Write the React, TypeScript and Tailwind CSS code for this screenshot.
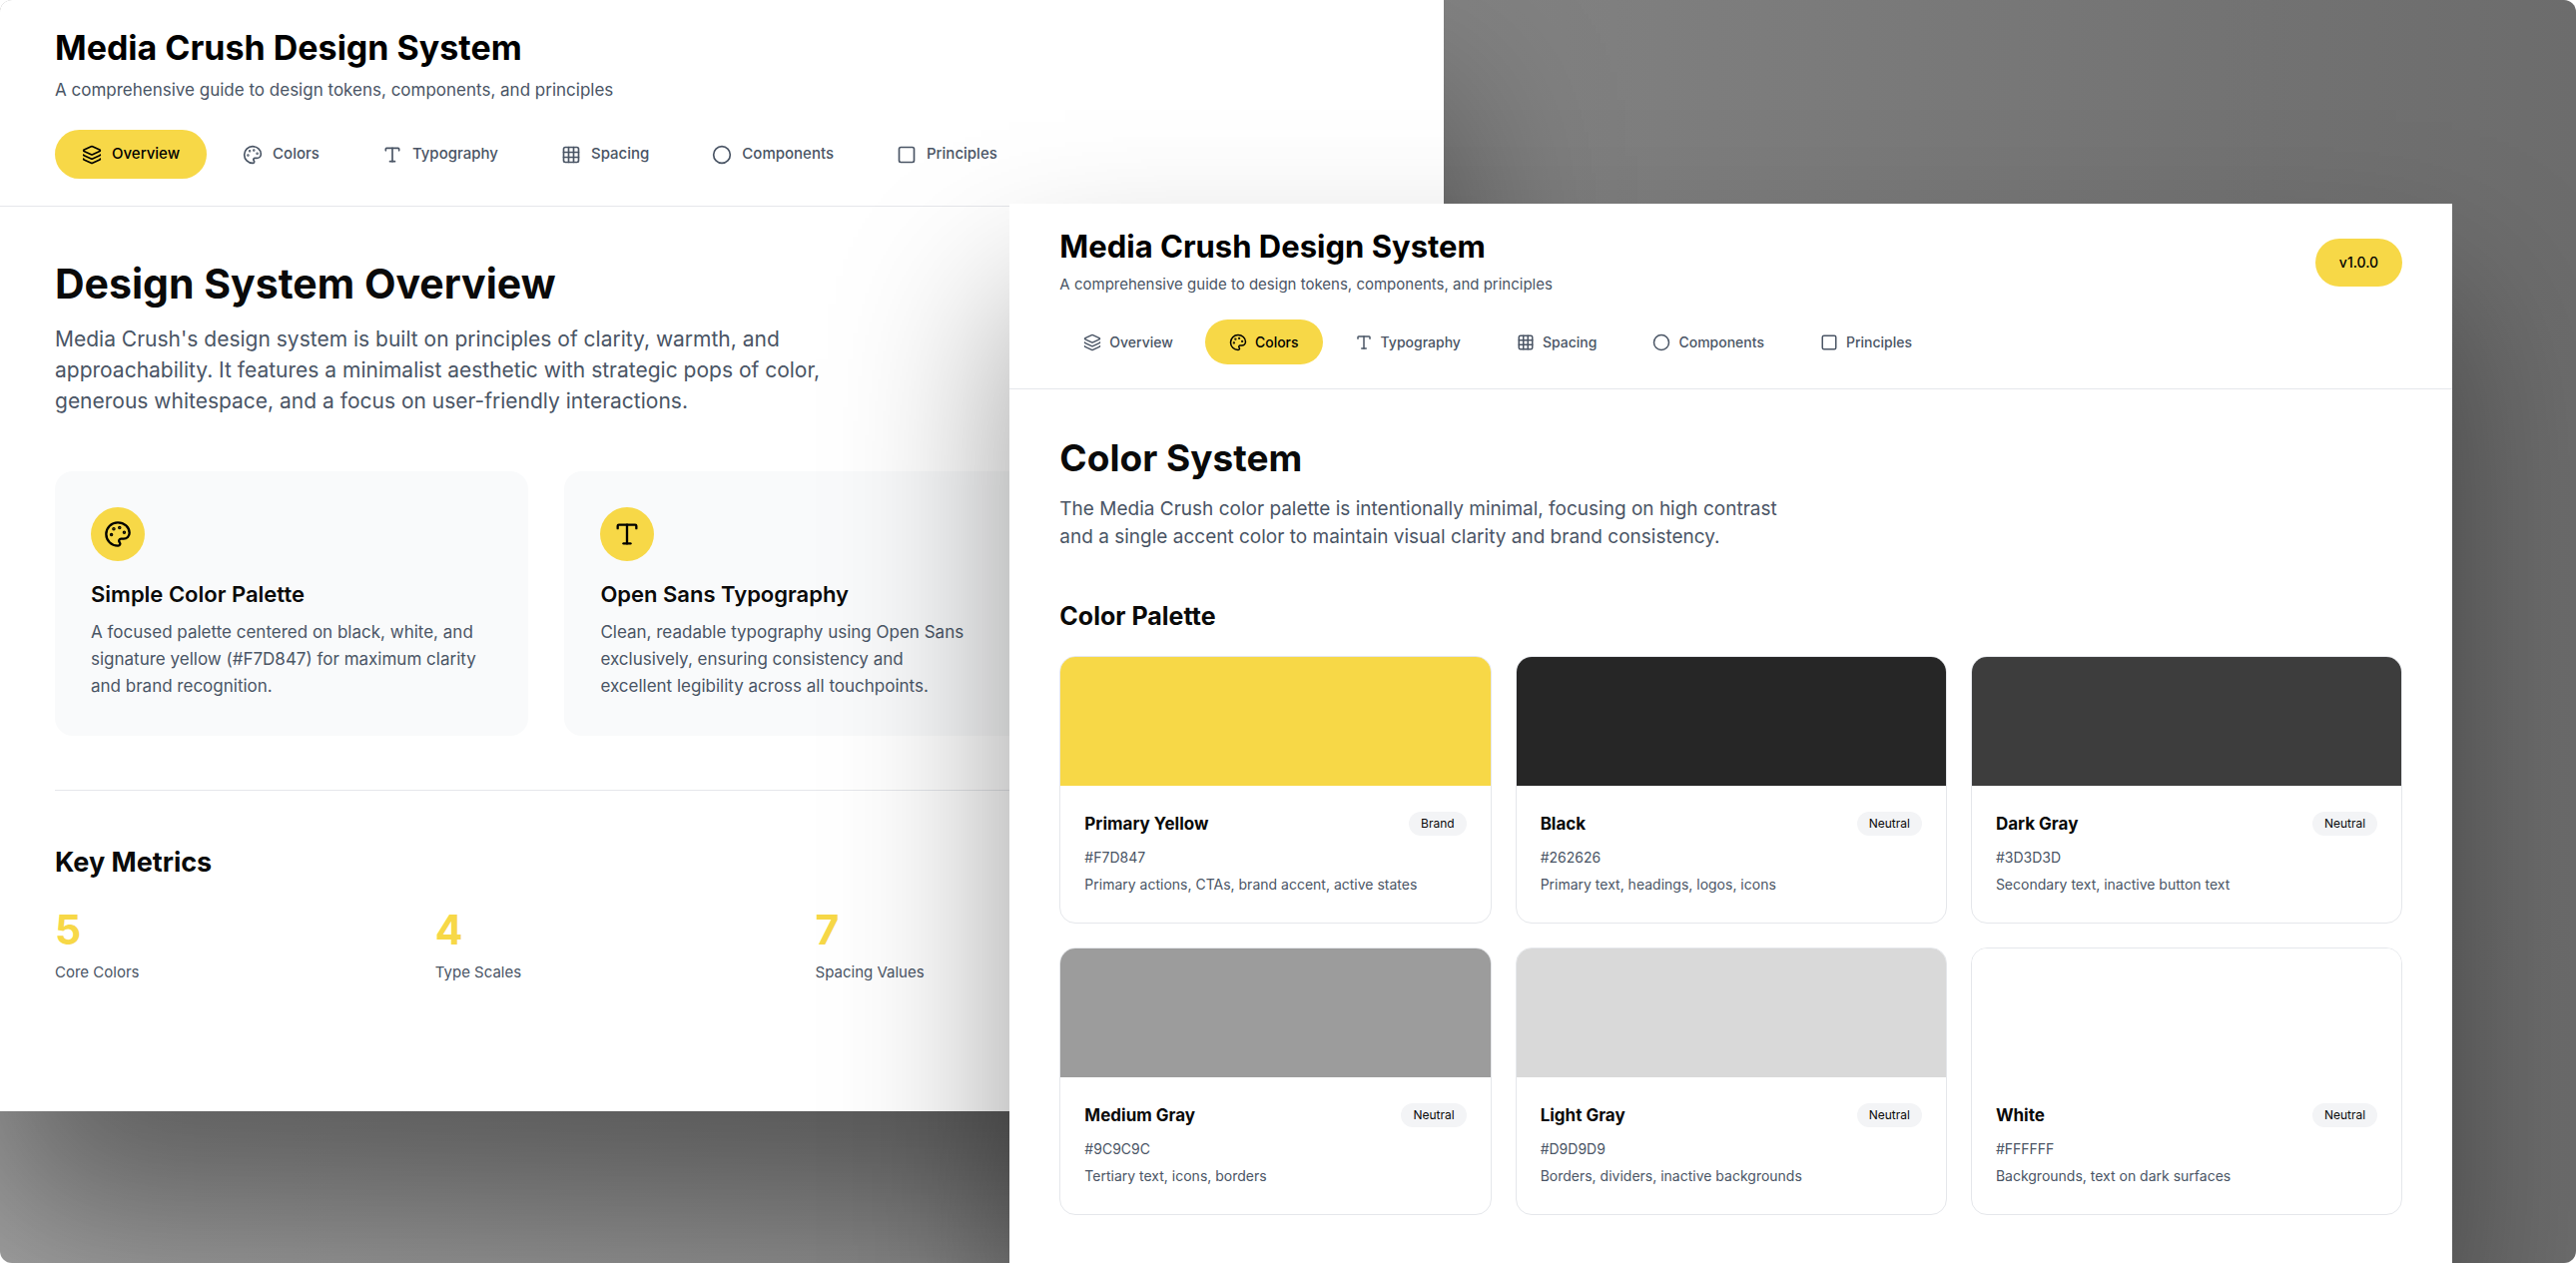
import { Circle, Grid3x3, Layers, Palette, Square, Type } from "lucide-react";
import type { LucideIcon } from "lucide-react";

// ═══════════════════════════════════════════════
// Media Crush Design System: overview + colors windows
// ═══════════════════════════════════════════════

interface Tab {
  label: string;
  icon: LucideIcon;
}

interface Swatch {
  name: string;
  hex: string;
  usage: string;
  group: string;
  fill: string;
}

const TABS: Tab[] = [
  { label: "Overview", icon: Layers },
  { label: "Colors", icon: Palette },
  { label: "Typography", icon: Type },
  { label: "Spacing", icon: Grid3x3 },
  { label: "Components", icon: Circle },
  { label: "Principles", icon: Square },
];

const FEATURES = [
  {
    icon: Palette,
    title: "Simple Color Palette",
    text: "A focused palette centered on black, white, and signature yellow (#F7D847) for maximum clarity and brand recognition.",
  },
  {
    icon: Type,
    title: "Open Sans Typography",
    text: "Clean, readable typography using Open Sans exclusively, ensuring consistency and excellent\u00a0legibility across all touchpoints.",
  },
];

const METRICS = [
  { value: "5", label: "Core Colors" },
  { value: "4", label: "Type Scales" },
  { value: "7", label: "Spacing Values" },
];

const SWATCHES: Swatch[] = [
  {
    name: "Primary Yellow",
    hex: "#F7D847",
    usage: "Primary actions, CTAs, brand accent, active states",
    group: "Brand",
    fill: "bg-[#f7d847]",
  },
  {
    name: "Black",
    hex: "#262626",
    usage: "Primary text, headings, logos, icons",
    group: "Neutral",
    fill: "bg-[#262626]",
  },
  {
    name: "Dark Gray",
    hex: "#3D3D3D",
    usage: "Secondary text, inactive button text",
    group: "Neutral",
    fill: "bg-[#3d3d3d]",
  },
  {
    name: "Medium Gray",
    hex: "#9C9C9C",
    usage: "Tertiary text, icons, borders",
    group: "Neutral",
    fill: "bg-[#9c9c9c]",
  },
  {
    name: "Light Gray",
    hex: "#D9D9D9",
    usage: "Borders, dividers, inactive backgrounds",
    group: "Neutral",
    fill: "bg-[#d9d9d9]",
  },
  {
    name: "White",
    hex: "#FFFFFF",
    usage: "Backgrounds, text on dark surfaces",
    group: "Neutral",
    fill: "bg-white",
  },
];

function Nav({ active, large = false }: { active: string; large?: boolean }) {
  return (
    <nav className={large ? "flex gap-[9px] mt-[26px]" : "flex gap-2 mt-[23px]"}>
      {TABS.map(({ label, icon: Icon }) => (
        <button
          key={label}
          type="button"
          className={`flex items-center rounded-full font-medium whitespace-nowrap ${
            large ? "h-[49px] px-[27px] gap-2.5 text-[15px]" : "h-[45px] px-6 gap-2 text-sm"
          } ${label === active ? "bg-[#f7d847] text-black" : "text-gray-600"}`}
        >
          <Icon className={large ? "size-5" : "size-[18px]"} />
          {label}
        </button>
      ))}
    </nav>
  );
}

function OverviewWindow() {
  return (
    <section className="w-[56.05%] overflow-hidden bg-white shadow-[0_100px_160px_rgba(0,0,0,0.4)]">
      {/* wider than the window, so the right-hand columns run off its edge */}
      <div className="w-[111%]">
        <header className="px-[55px] pt-7 pb-[27px] border-b border-gray-200">
          <h1 className="text-[34px] leading-10 font-bold text-black">Media Crush Design System</h1>
          <p className="mt-2 text-[17px] leading-7 text-gray-600">
            A comprehensive guide to design tokens, components, and principles
          </p>
          <Nav active="Overview" large />
        </header>

        <main className="px-[55px] pt-[54px] pb-[127px]">
          <h2 className="text-[41px] leading-[46px] font-bold text-neutral-950">
            Design System Overview
          </h2>
          <p className="mt-[17px] max-w-[820px] text-[21px] leading-[31px] text-gray-600">
            Media Crush's design system is built on principles of clarity, warmth, and
            approachability. It features a minimalist aesthetic with strategic pops of color,
            generous whitespace, and a focus on user-friendly interactions.
          </p>

          <div className="mt-[55px] grid grid-cols-3 gap-9">
            {FEATURES.map(({ icon: Icon, title, text }) => (
              <article key={title} className="rounded-[18px] bg-gray-50 p-9">
                <div className="flex size-[54px] items-center justify-center rounded-full bg-[#f7d847]">
                  <Icon className="size-7 text-black" />
                </div>
                <h3 className="mt-[18px] text-[22px] leading-[30px] font-semibold text-neutral-950">
                  {title}
                </h3>
                <p className="mt-2.5 text-[17px] leading-[27px] text-gray-600">{text}</p>
              </article>
            ))}
          </div>

          <hr className="my-[54px] border-gray-200" />

          <h2 className="text-[27px] leading-9 font-bold text-neutral-950">Key Metrics</h2>
          <dl className="mt-[26px] grid grid-cols-4 gap-7">
            {METRICS.map((m) => (
              <div key={m.label} className="flex flex-col-reverse gap-2">
                <dt className="text-[15px] leading-6 text-gray-600">{m.label}</dt>
                <dd className="text-[41px] leading-[46px] font-bold text-[#f7d847]">{m.value}</dd>
              </div>
            ))}
          </dl>
        </main>
      </div>
    </section>
  );
}

function SwatchCard({ swatch }: { swatch: Swatch }) {
  return (
    <article className="overflow-hidden rounded-2xl border border-gray-200 bg-white">
      <div className={`h-[129px] ${swatch.fill}`} />
      <div className="px-6 pt-6 pb-[25px]">
        <div className="flex items-center justify-between">
          <h3 className="text-[17px] leading-7 font-bold text-neutral-950">{swatch.name}</h3>
          <span className="rounded-full bg-gray-100 px-3 py-1 text-xs text-neutral-950">
            {swatch.group}
          </span>
        </div>
        <p className="mt-1.5 text-sm leading-[27px] text-gray-600">{swatch.hex}</p>
        <p className="text-sm leading-[27px] text-gray-600">{swatch.usage}</p>
      </div>
    </article>
  );
}

function ColorsWindow() {
  return (
    <section className="absolute top-[204px] bottom-0 left-[39.2%] w-[56%] overflow-hidden bg-white shadow-[0_100px_160px_rgba(0,0,0,0.4)]">
      <header className="px-[50px] pt-[25px] pb-6 border-b border-gray-200">
        <div className="flex items-center justify-between">
          <div>
            <h1 className="text-[31px] leading-9 font-bold text-black">
              Media Crush Design System
            </h1>
            <p className="mt-2 text-[15px] leading-6 text-gray-600">
              A comprehensive guide to design tokens, components, and principles
            </p>
          </div>
          <span className="flex h-12 items-center rounded-full bg-[#f7d847] px-6 text-sm font-medium text-black">
            v1.0.0
          </span>
        </div>
        <Nav active="Colors" />
      </header>

      <main className="px-[50px] pt-[49px] pb-8">
        <h2 className="text-[37px] leading-10 font-bold text-neutral-950">Color System</h2>
        <p className="mt-[17px] max-w-[740px] text-[19px] leading-7 text-gray-600">
          The Media Crush color palette is intentionally minimal, focusing on high contrast and a
          single accent color to maintain visual clarity and brand consistency.
        </p>

        <h3 className="mt-[49px] text-[25px] leading-8 font-bold text-neutral-950">
          Color Palette
        </h3>
        <div className="mt-6 grid grid-cols-3 gap-6">
          {SWATCHES.map((s) => (
            <SwatchCard key={s.hex} swatch={s} />
          ))}
        </div>
        <hr className="mt-12 border-gray-100" />
      </main>
    </section>
  );
}

export default function App() {
  return (
    <div className="min-h-screen bg-white font-[Inter,sans-serif] antialiased">
      <div className="relative flex min-h-screen items-start overflow-hidden rounded-xl bg-linear-to-r from-[#a0a0a0] to-[#6c6c6c]">
        <OverviewWindow />
        <ColorsWindow />
      </div>
    </div>
  );
}
